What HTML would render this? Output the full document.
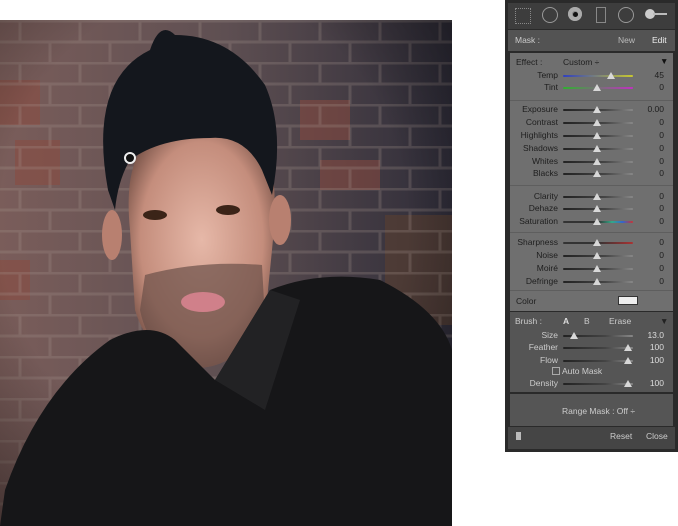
<!DOCTYPE html>
<html><head><meta charset="utf-8"><style>
body{margin:0;width:678px;height:526px;background:#fff;position:relative;overflow:hidden;font-family:"Liberation Sans",sans-serif}
.p{position:absolute;left:505px;top:0;width:173px;height:452px;background:#2a2a2a}
.t{position:absolute;font-size:8.5px;color:#1e1e1e;white-space:nowrap}
.l{text-align:right;width:60px;left:-7px}
.s{position:absolute;left:58px;width:70px;height:2px;background:linear-gradient(90deg,#222,#444 60%,#888);border-radius:1px}
.k{position:absolute;width:0;height:0;border-left:4px solid transparent;border-right:4px solid transparent;border-bottom:7px solid #d8d8d8}
.w{color:#ddd}
</style></head><body>
<svg style="position:absolute;left:0;top:20px" width="452" height="506" viewBox="0 0 452 506">
<defs>
<linearGradient id="bg" x1="0" x2="1" y1="0" y2="0"><stop offset="0" stop-color="#7a5d5a"/><stop offset=".5" stop-color="#5e4f52"/><stop offset="1" stop-color="#2e2c38"/></linearGradient>
<radialGradient id="sk" cx=".5" cy=".45" r=".6"><stop offset="0" stop-color="#e6b8a8"/><stop offset=".7" stop-color="#c48d7c"/><stop offset="1" stop-color="#6f4c42"/></radialGradient>
<pattern id="br" width="60" height="42" patternUnits="userSpaceOnUse"><path d="M0 1H60M0 22H60M20 1V22M50 22V42" stroke="#a89890" stroke-width="3" opacity=".25" fill="none"/></pattern>
<radialGradient id="vg" cx=".45" cy=".4" r=".75"><stop offset=".6" stop-color="#000" stop-opacity="0"/><stop offset="1" stop-color="#000" stop-opacity=".45"/></radialGradient>
</defs>
<rect width="452" height="506" fill="url(#bg)"/>
<g fill="#8a4a40" opacity=".55"><rect x="0" y="60" width="40" height="45"/><rect x="15" y="120" width="45" height="45"/><rect x="0" y="240" width="30" height="40"/><rect x="320" y="140" width="60" height="30"/><rect x="300" y="80" width="50" height="40"/></g>
<rect x="385" y="195" width="67" height="110" fill="#5a4030" opacity=".6"/>
<rect width="452" height="506" fill="url(#br)"/>
<rect width="452" height="506" fill="url(#vg)"/>
<path d="M130 210 Q122 130 160 115 L255 115 Q282 135 272 230 L265 300 Q240 345 200 348 Q150 340 135 290 Z" fill="url(#sk)"/>
<ellipse cx="112" cy="215" rx="10" ry="25" fill="#b88070"/>
<ellipse cx="280" cy="200" rx="11" ry="25" fill="#b88070"/>
<path d="M145 255 Q200 240 262 245 L265 300 Q240 345 200 348 Q150 340 140 290 Z" fill="#6b5048" opacity=".7"/>
<path d="M108 170 Q88 60 150 30 Q160 0 175 15 Q230 15 265 65 Q285 110 272 175 L262 150 Q245 115 210 118 Q160 118 130 140 Q118 160 115 190 Z" fill="#14171d"/>
<ellipse cx="155" cy="195" rx="12" ry="5" fill="#3b2418"/><ellipse cx="228" cy="190" rx="12" ry="5" fill="#3b2418"/>
<ellipse cx="203" cy="282" rx="22" ry="10" fill="#d0808a"/>
<path d="M0 506 L5 470 Q40 370 110 320 Q150 300 175 320 L215 360 L270 270 Q320 250 380 260 Q440 290 452 330 L452 506 Z" fill="#161618"/>
<path d="M215 360 L270 270 L300 280 L265 390 Z" fill="#222224"/>
<circle cx="130" cy="138" r="5" fill="#111" stroke="#eee" stroke-width="2"/>
</svg>
<div class="p">
 <div style="position:absolute;left:3px;top:3px;width:167px;height:26px;background:#3d3d3d"></div>
 <div style="position:absolute;left:10px;top:8px;width:14px;height:14px;border:1px dotted #888"></div>
 <div style="position:absolute;left:37px;top:7px;width:14px;height:14px;border:1.5px solid #999;border-radius:50%"></div>
 <div style="position:absolute;left:63px;top:7px;width:14px;height:14px;background:#888;border-radius:50%;box-shadow:inset 0 0 0 4px #aaa"></div><div style="position:absolute;left:68px;top:12px;width:5px;height:5px;background:#111;border-radius:50%"></div>
 <div style="position:absolute;left:91px;top:7px;width:8px;height:14px;border:1px solid #888"></div>
 <div style="position:absolute;left:113px;top:7px;width:14px;height:14px;border:1.5px solid #999;border-radius:50%"></div>
 <div style="position:absolute;left:140px;top:9px;width:10px;height:10px;background:#ccc;border-radius:50%"></div><div style="position:absolute;left:148px;top:13px;width:14px;height:2px;background:#bbb"></div>
 <div style="position:absolute;left:3px;top:30px;width:167px;height:21px;background:#535353"></div>
 <div class="t w" style="left:10px;top:35px;color:#ccc">Mask :</div>
 <div class="t" style="left:113px;top:35px;color:#bbb">New</div><div class="t" style="left:147px;top:35px;color:#eee">Edit</div>
 <div style="position:absolute;left:5px;top:53px;width:163px;height:258px;background:#6f6f6f"></div>
 <div style="position:absolute;left:5px;top:100px;width:163px;height:1px;background:#5e5e5e"></div>
 <div style="position:absolute;left:5px;top:185px;width:163px;height:1px;background:#5e5e5e"></div>
 <div style="position:absolute;left:5px;top:232px;width:163px;height:1px;background:#5e5e5e"></div>
 <div style="position:absolute;left:5px;top:290px;width:163px;height:1px;background:#5e5e5e"></div>
 <div class="t" style="left:11px;top:57px">Effect :</div><div class="t" style="left:58px;top:57px">Custom ÷</div><div class="t" style="left:155px;top:56px;color:#111">▼</div>
 <div style="position:absolute;left:5px;top:312px;width:163px;height:80px;background:#555"></div>
 <div style="position:absolute;left:5px;top:394px;width:163px;height:32px;background:#555"></div>
 <div style="position:absolute;left:3px;top:427px;width:167px;height:22px;background:#454545"></div>
 <div class="t w" style="left:10px;top:316px;color:#ccc">Brush :</div><div class="t" style="left:58px;top:316px;color:#ddd;font-weight:bold">A</div><div class="t" style="left:79px;top:316px;color:#ccc">B</div><div class="t" style="left:104px;top:316px;color:#ccc">Erase</div><div class="t" style="left:155px;top:316px;color:#222">▼</div>
 <div class="t" style="left:57px;top:406px;color:#ccc">Range Mask : Off ÷</div>
 <div style="position:absolute;left:11px;top:432px;width:5px;height:8px;background:#bbb"></div>
 <div class="t" style="left:105px;top:431px;color:#ccc">Reset</div><div class="t" style="left:141px;top:431px;color:#ccc">Close</div>
 <div class="t" style="left:11px;top:296px">Color</div><div style="position:absolute;left:113px;top:296px;width:18px;height:7px;background:#eee;border:1px solid #333"></div>
 <div style="position:absolute;left:47px;top:367px;width:6px;height:6px;border:1px solid #aaa"></div><div class="t" style="left:57px;top:366px;color:#ccc">Auto Mask</div>
</div>
<div id="rows"></div>
<script>
var R=[["Temp",75,"45",106,"linear-gradient(90deg,#3040c0,#c8c830)"],["Tint",87,"0",92,"linear-gradient(90deg,#30b030,#c030c0)"],
["Exposure",109,"0.00",92],["Contrast",122,"0",92],["Highlights",135,"0",92],["Shadows",148,"0",92],["Whites",161,"0",92],["Blacks",173,"0",92],
["Clarity",196,"0",92],["Dehaze",208,"0",92],["Saturation",221,"0",92,"linear-gradient(90deg,#333 50%,#3a8 70%,#36c 85%,#c33)"],
["Sharpness",242,"0",92,"linear-gradient(90deg,#333 50%,#a33)"],["Noise",255,"0",92],["Moiré",268,"0",92],["Defringe",281,"0",92],
["Size",335,"13.0",69,0,1],["Feather",347,"100",123,0,1],["Flow",360,"100",123,0,1],["Density",383,"100",123,0,1]];
var h="";R.forEach(function(r){var c=r[5]?"#ccc":"#1e1e1e";
h+='<div class="t l" style="left:'+(505-7)+'px;top:'+(r[1]-5)+'px;width:60px;color:'+c+'">'+r[0]+'</div>';
h+='<div class="s" style="left:563px;top:'+(r[1])+'px;'+(r[4]?'background:'+r[4]:'')+'"></div>';
h+='<div class="k" style="left:'+(505+r[3]-4)+'px;top:'+(r[1]-3)+'px"></div>';
h+='<div class="t" style="left:620px;width:44px;text-align:right;top:'+(r[1]-5)+'px;color:'+(r[5]?"#ddd":"#1e1e1e")+'">'+r[2]+'</div>';});
document.getElementById("rows").innerHTML=h;
</script>
</body></html>
